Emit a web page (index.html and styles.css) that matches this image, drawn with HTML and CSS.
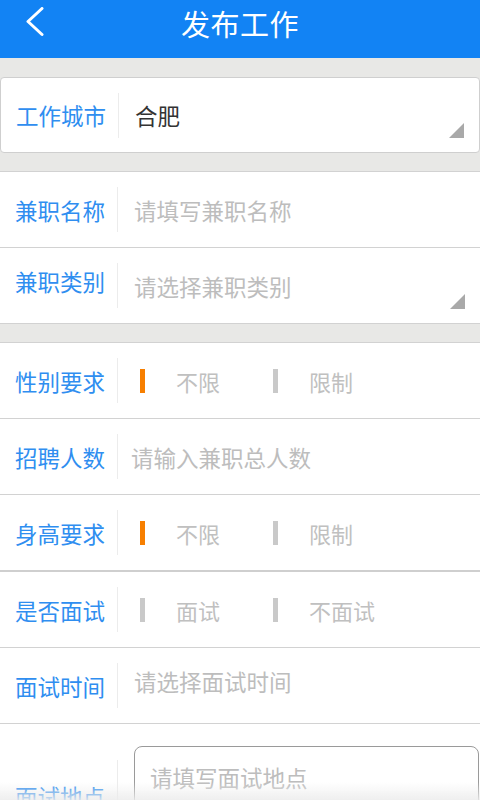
FILE: index.html
```html
<!DOCTYPE html>
<html lang="zh-CN">
<head>
<meta charset="utf-8">
<title>发布工作</title>
<link rel="stylesheet" href="styles.css">
</head>
<body>
<header class="topbar">
  <div class="back">
    <svg width="20" height="30" viewBox="0 0 20 30"><polyline points="17,1.5 3,14.5 17,27.5" fill="none" stroke="#fff" stroke-width="3" stroke-linecap="round" stroke-linejoin="round"/></svg>
  </div>
  <h1 class="title">发布工作</h1>
  <div></div>
</header>

<section class="card">
  <div class="row">
    <div class="label">工作城市</div>
    <div class="value">合肥</div>
    <span class="corner"></span>
  </div>
</section>

<section class="group">
  <div class="row">
    <div class="label">兼职名称</div>
    <div class="value placeholder">请填写兼职名称</div>
  </div>
  <div class="row">
    <div class="label"><span class="raise">兼职类别</span></div>
    <div class="value placeholder">请选择兼职类别</div>
    <span class="corner"></span>
  </div>
</section>

<section class="group">
  <div class="row">
    <div class="label">性别要求</div>
    <div class="options">
      <div class="option"><span class="bar on"></span>不限</div>
      <div class="option"><span class="bar"></span>限制</div>
    </div>
  </div>
  <div class="row">
    <div class="label">招聘人数</div>
    <div class="value placeholder tight">请输入兼职总人数</div>
  </div>
  <div class="row thick">
    <div class="label">身高要求</div>
    <div class="options">
      <div class="option"><span class="bar on"></span>不限</div>
      <div class="option"><span class="bar"></span>限制</div>
    </div>
  </div>
  <div class="row">
    <div class="label">是否面试</div>
    <div class="options">
      <div class="option"><span class="bar"></span>面试</div>
      <div class="option"><span class="bar"></span>不面试</div>
    </div>
  </div>
  <div class="row">
    <div class="label">面试时间</div>
    <div class="value placeholder"><span class="raise">请选择面试时间</span></div>
  </div>
  <div class="row tall">
    <div class="label long">面试地点</div>
    <div class="textarea">请填写面试地点</div>
  </div>
</section>

<div class="fade"></div>
</body>
</html>
```

FILE: styles.css
```css
* { box-sizing: border-box; }
html, body { margin: 0; padding: 0; }
body {
  background: #e8e8e6;
  font-family: "Noto Sans CJK SC", "Noto Sans", sans-serif;
  width: 480px;
  height: 800px;
  overflow: hidden;
}
.topbar {
  height: 58px;
  background: #1283f4;
  display: grid;
  grid-template-columns: 60px 1fr 60px;
  align-items: start;
}
.back {
  padding: 7px 0 0 25px;
  height: 46px;
}
.back svg { display: block; }
.title {
  margin: 0;
  color: #fff;
  font-size: 29px;
  font-weight: normal;
  line-height: 46px;
  text-align: center;
  letter-spacing: 0.5px;
}
.card {
  margin-top: 19px;
  background: #fff;
  border: 1px solid #cfcfcf;
  border-radius: 4px;
}
.card .row { height: 74px; border-bottom: none; }
.group {
  margin-top: 18px;
  background: #fff;
  border-top: 1px solid #d2d2d2;
}
.row {
  height: 76px;
  border-bottom: 1px solid #d2d2d2;
  display: flex;
  align-items: center;
}
.row.thick { border-bottom: 2px solid #cfcfcf; height: 77px; }
.label {
  width: 118px;
  flex: none;
  height: 45px;
  padding-left: 15px;
  border-right: 1px solid #ececec;
  display: flex;
  align-items: center;
  color: #2f8ef0;
  font-size: 22.5px;
}
.raise { position: relative; top: -5px; }
.value {
  flex: 1;
  padding-left: 16px;
  font-size: 22.5px;
  color: #333;
}
.placeholder { color: #bdbdbd; }
.value.tight { padding-left: 13px; }
.corner {
  align-self: flex-end;
  margin: 0 15px 14px 0;
  width: 0;
  height: 0;
  border-left: 15px solid transparent;
  border-bottom: 15px solid #a9a9a9;
}
.options {
  display: flex;
  padding-left: 22px;
}
.option {
  width: 133px;
  display: flex;
  align-items: center;
  font-size: 22px;
  color: #c0c0c0;
}
.bar {
  width: 5px;
  height: 24px;
  background: #c9c9c9;
  margin-right: 31px;
}
.bar.on { background: #f77f00; }
.row.tall {
  height: 144px;
  align-items: center;
}
.label.long { height: 72px; }
.textarea {
  flex: 1;
  height: 100px;
  margin: 0 1px 0 16px;
  border: 1px solid #9a9a9a;
  border-radius: 8px;
  padding: 14px 15px;
  font-size: 22.5px;
  color: #bdbdbd;
  align-self: flex-start;
  margin-top: 22px;
}
.fade {
  position: fixed;
  left: 0;
  right: 0;
  bottom: 0;
  height: 18px;
  background: linear-gradient(to bottom, rgba(240,240,240,0), rgba(236,236,236,0.85));
}
```
